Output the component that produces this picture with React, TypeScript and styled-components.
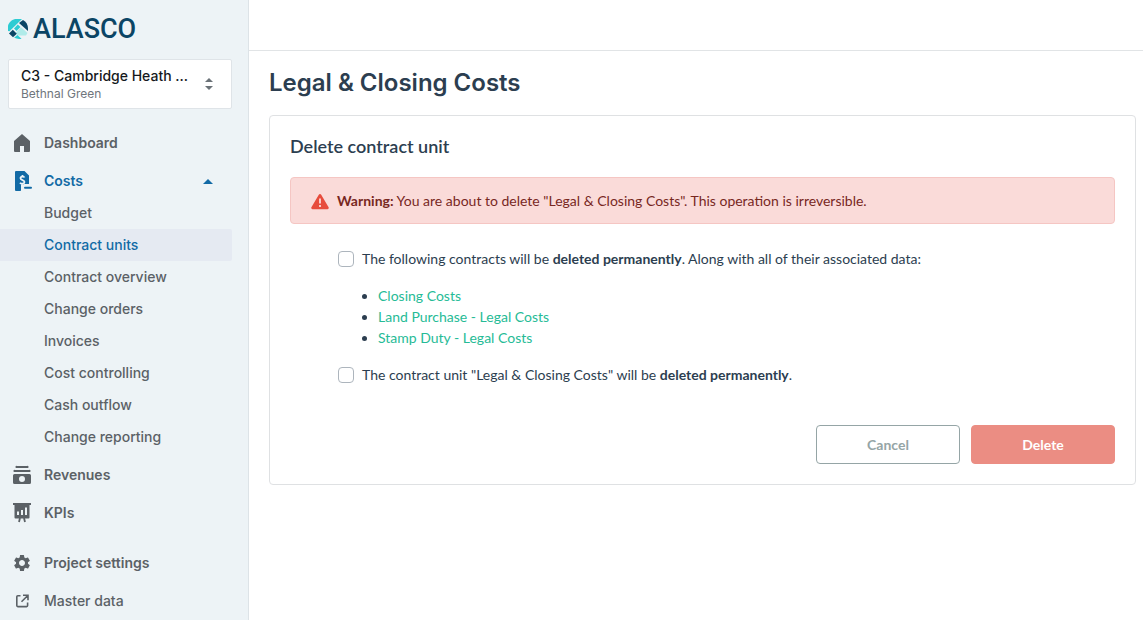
import React from "react";
import styled, { createGlobalStyle, css } from "styled-components";
import { MdSettings } from "react-icons/md";

const GlobalStyle = createGlobalStyle`
  *, *::before, *::after { box-sizing: border-box; }
  body {
    margin: 0;
    background: #fff;
    color: #2c3e50;
    font-family: Lato, "Liberation Sans", sans-serif;
    font-size: 14px;
    line-height: 21px;
  }
`;

const inter = css`
  font-family: Inter, "Liberation Sans", sans-serif;
`;

const Page = styled.div`
  display: flex;
  min-height: 100vh;
`;

const Sidebar = styled.aside`
  ${inter}
  flex: 0 0 249px;
  height: 100vh;
  overflow: hidden;
  padding-right: 16px;
  background: #edf3f6;
  border-right: 1px solid #dde3e7;
`;

const Brand = styled.a`
  display: flex;
  align-items: center;
  gap: 4px;
  height: 58px;
  margin-bottom: 1px;
  padding-left: 8px;
  color: #0b4565;
  text-decoration: none;
`;

const BrandName = styled.span`
  font-family: Roboto, "Liberation Sans", sans-serif;
  font-size: 27px;
  font-weight: 500;
  line-height: 32px;
`;

const ProjectPicker = styled.button`
  ${inter}
  display: flex;
  align-items: center;
  justify-content: space-between;
  width: calc(100% - 8px);
  height: 50px;
  margin: 0 0 18px 8px;
  padding: 0 18px 0 12px;
  border: 1px solid #dfe4e8;
  border-radius: 2px;
  background: #fff;
  text-align: left;
`;

const ProjectText = styled.span`
  display: flex;
  flex-direction: column;
`;

const ProjectName = styled.span`
  color: #16191d;
  font-size: 14px;
  font-weight: 500;
  line-height: 20px;
`;

const ProjectPlace = styled.span`
  color: #6f767c;
  font-size: 12px;
  line-height: 16px;
`;

const NavList = styled.ul<{ $spaced?: boolean }>`
  display: flex;
  flex-direction: column;
  gap: 6px;
  margin: ${(p) => (p.$spaced ? "18px 0 0" : "0")};
  padding: 0;
  list-style: none;
`;

const NavLink = styled.a<{ $active?: boolean; $light?: boolean }>`
  display: flex;
  align-items: center;
  gap: 12px;
  height: 32px;
  padding: 0 19px 0 12px;
  color: ${(p) => (p.$active ? "#126aa5" : "#5b6166")};
  font-size: 14px;
  font-weight: ${(p) => (p.$light ? 500 : 600)};
  line-height: 20px;
  text-decoration: none;

  svg { flex: none; }
`;

const NavLabel = styled.span`
  flex: 1;
`;

const SubList = styled.ul`
  margin: 0;
  padding: 0;
  list-style: none;
`;

const SubLink = styled.a<{ $active?: boolean }>`
  display: flex;
  align-items: center;
  height: 32px;
  padding-left: 44px;
  border-radius: 0 2px 2px 0;
  background: ${(p) => (p.$active ? "#e5eaf2" : "transparent")};
  color: ${(p) => (p.$active ? "#126aa5" : "#5b6166")};
  font-size: 14px;
  font-weight: 500;
  line-height: 20px;
  text-decoration: none;
`;

const Main = styled.main`
  flex: 1;
  min-width: 0;
`;

const TopBar = styled.header`
  height: 51px;
  border-bottom: 1px solid #e1e4e6;
`;

const Content = styled.div`
  padding: 16px 7px 20px 20px;
`;

const PageTitle = styled.h1`
  ${inter}
  margin: 0 0 16px;
  font-size: 24px;
  font-weight: 600;
  line-height: 32px;
`;

const Card = styled.section`
  padding: 20px;
  border: 1px solid #dfe1e3;
  border-radius: 4px;
`;

const CardTitle = styled.h2`
  margin: 0 0 20px;
  font-size: 18px;
  font-weight: 600;
  line-height: 21px;
`;

const Alert = styled.div`
  display: flex;
  align-items: center;
  gap: 8px;
  padding: 12px 20px;
  border: 1px solid #f5c6c3;
  border-radius: 4px;
  background: #fadbd9;
  color: #78281f;
`;

const Confirmations = styled.div`
  padding: 24px 48px 40px;
`;

const CheckLabel = styled.label`
  display: flex;
  align-items: center;
  gap: 8px;
`;

const Checkbox = styled.input`
  appearance: none;
  flex: none;
  width: 16px;
  height: 16px;
  margin: 0;
  border: 1px solid #adb5bd;
  border-radius: 4px;
  background: #fff;

  &:checked { background: #18bc9c; }
`;

const ContractList = styled.ul`
  margin: 16px 0;
  padding-left: 40px;
`;

const ContractLink = styled.a`
  color: #26bb96;
  text-decoration: none;
`;

const Actions = styled.div`
  display: flex;
  justify-content: flex-end;
  gap: 11px;
`;

const Button = styled.button<{ $danger?: boolean }>`
  width: 144px;
  height: 39px;
  padding: 0;
  border: 1px solid ${(p) => (p.$danger ? "#eb8d83" : "#95a5a6")};
  border-radius: 4px;
  background: ${(p) => (p.$danger ? "#eb8d83" : "#fff")};
  color: ${(p) => (p.$danger ? "#fff" : "#95a5a6")};
  font-family: inherit;
  font-size: 14px;
  font-weight: 700;
  line-height: 20px;
`;

const LogoMark = () => (
  <svg width="21" height="20" viewBox="0 0 21 20" aria-hidden="true">
    <path d="M0 12V6.500C1.500 2.500 4.500 0 8.500 0H14L1.500 12.200z" fill="#2dccd3" />
    <path d="M15 1c3 1.500 5 4.500 5 8.500V12L11 4z" fill="#0b4565" />
    <path d="M9.800 5.500 12.500 8 8.500 12 6 9.500z" fill="#2dccd3" />
    <path d="M13 8.200 19.500 14 18 16.500H10L7.500 14z" fill="#b0ebe9" />
    <path d="M4.800 10.800 8.800 14.800 5 18.300 1 14.500z" fill="#0b4565" />
    <path d="M9.300 16 13.500 19.700c-2.500.6-5 .2-7.300-.9z" fill="#2dccd3" />
  </svg>
);

const SortIcon = () => (
  <svg width="8" height="12" viewBox="0 0 8 12" fill="#6b7278" aria-hidden="true">
    <path d="M0 4 4 0l4 4zM0 8h8l-4 4z" />
  </svg>
);

const HomeIcon = () => (
  <svg width="20" height="20" viewBox="0 0 20 20" fill="currentColor" aria-hidden="true">
    <path d="M10 1 18 8v10a1 1 0 0 1-1 1h-5v-6H8v6H3a1 1 0 0 1-1-1V8z" />
  </svg>
);

const CostsIcon = () => (
  <svg width="20" height="20" viewBox="0 0 20 20" aria-hidden="true">
    <path
      fill="currentColor"
      d="M4 0h8.500L17 4.500V13h-4.500a2.500 2.500 0 0 0-2.500 2.500V18l-1.500 2H4a1 1 0 0 1-1-1V1a1 1 0 0 1 1-1z"
    />
    <path
      d="M12.500 6.500C12 5.200 8.500 5 8.500 7.200c0 2.300 4 1.500 4 3.800 0 2-3.500 2-4.500.7M10.500 4v2M10 12.500V15"
      fill="none"
      stroke="#edf3f6"
      strokeWidth="1.800"
    />
    <path d="M9 14h11v6H9z" fill="#edf3f6" />
    <path d="M13 16.700h6" stroke="currentColor" strokeWidth="2" strokeLinecap="round" />
  </svg>
);

const CaretIcon = () => (
  <svg width="10" height="5" viewBox="0 0 10 5" fill="currentColor" aria-hidden="true">
    <path d="M0 5 5 0l5 5z" />
  </svg>
);

const RevenuesIcon = () => (
  <svg width="20" height="20" viewBox="0 0 20 20" fill="currentColor" aria-hidden="true">
    <path d="M5 1h10a1 1 0 0 1 1 2H4a1 1 0 0 1 1-2zM3 5h14a1 1 0 0 1 1 2H2a1 1 0 0 1 1-2z" />
    <path
      fillRule="evenodd"
      d="M2.500 9h15A1.500 1.500 0 0 1 19 10.500v7a1.500 1.500 0 0 1-1.500 1.500h-15A1.500 1.500 0 0 1 1 17.500v-7A1.500 1.500 0 0 1 2.500 9zM10 11a3 3 0 1 0 0 6 3 3 0 0 0 0-6z"
    />
  </svg>
);

const KpiIcon = () => (
  <svg width="20" height="20" viewBox="0 0 20 20" aria-hidden="true">
    <path d="M1 0h18v2h-1.500v12.500a1 1 0 0 1-1 1h-13a1 1 0 0 1-1-1V2H1z" fill="currentColor" />
    <path d="M6 8.500V12M10 7v5M14 4.500V12" stroke="#edf3f6" strokeWidth="2" />
    <path d="M8 15l-1 4M12 15l1 4" stroke="currentColor" strokeWidth="1.800" />
  </svg>
);

const ExternalIcon = () => (
  <svg width="20" height="20" viewBox="0 0 20 20" fill="none" stroke="currentColor" strokeWidth="1.600" aria-hidden="true">
    <path d="M8.500 4.800H5.800a1 1 0 0 0-1 1v8.800a1 1 0 0 0 1 1h8.800a1 1 0 0 0 1-1V11.500M11 4.200h5v5M16 4.200l-6.500 6.500" />
  </svg>
);

const WarningIcon = () => (
  <svg width="18" height="18" viewBox="0 0 18 18" aria-hidden="true">
    <path
      d="M7.800 2.700a1.400 1.400 0 0 1 2.400 0l7.400 12.600a1.300 1.300 0 0 1-1.200 1.900H1.600a1.300 1.300 0 0 1-1.200-1.900z"
      fill="#e74c3c"
    />
    <path d="M9 6.500v5M9 13v2" stroke="#fadbd9" strokeWidth="1.800" />
  </svg>
);

const costPages = [
  "Budget",
  "Contract units",
  "Contract overview",
  "Change orders",
  "Invoices",
  "Cost controlling",
  "Cash outflow",
  "Change reporting",
];

const contracts = ["Closing Costs", "Land Purchase - Legal Costs", "Stamp Duty - Legal Costs"];

export default function App() {
  return (
    <>
      <GlobalStyle />
      <Page>
        <Sidebar>
          <Brand href="#">
            <LogoMark />
            <BrandName>ALASCO</BrandName>
          </Brand>
          <ProjectPicker type="button">
            <ProjectText>
              <ProjectName>C3 - Cambridge Heath ...</ProjectName>
              <ProjectPlace>Bethnal Green</ProjectPlace>
            </ProjectText>
            <SortIcon />
          </ProjectPicker>
          <nav aria-label="Project">
            <NavList>
              <li>
                <NavLink href="#dashboard"><HomeIcon /><NavLabel>Dashboard</NavLabel></NavLink>
              </li>
              <li>
                <NavLink href="#costs" $active>
                  <CostsIcon />
                  <NavLabel>Costs</NavLabel>
                  <CaretIcon />
                </NavLink>
                <SubList>
                  {costPages.map((name) => (
                    <li key={name}>
                      <SubLink href="#costs" $active={name === "Contract units"}>{name}</SubLink>
                    </li>
                  ))}
                </SubList>
              </li>
              <li>
                <NavLink href="#revenues"><RevenuesIcon /><NavLabel>Revenues</NavLabel></NavLink>
              </li>
              <li>
                <NavLink href="#kpis"><KpiIcon /><NavLabel>KPIs</NavLabel></NavLink>
              </li>
            </NavList>
            <NavList $spaced>
              <li>
                <NavLink href="#settings"><MdSettings size={20} /><NavLabel>Project settings</NavLabel></NavLink>
              </li>
              <li>
                <NavLink href="#master" $light><ExternalIcon /><NavLabel>Master data</NavLabel></NavLink>
              </li>
            </NavList>
          </nav>
        </Sidebar>
        <Main>
          <TopBar />
          <Content>
            <PageTitle>Legal &amp; Closing Costs</PageTitle>
            <Card>
              <CardTitle>Delete contract unit</CardTitle>
              <Alert role="alert">
                <WarningIcon />
                <span>
                  <strong>Warning:</strong> You are about to delete "Legal &amp; Closing Costs". This operation is irreversible.
                </span>
              </Alert>
              <Confirmations>
                <CheckLabel>
                  <Checkbox type="checkbox" />
                  <span>
                    The following contracts will be <strong>deleted permanently</strong>. Along with all of their associated data:
                  </span>
                </CheckLabel>
                <ContractList>
                  {contracts.map((name) => (
                    <li key={name}><ContractLink href="#contract">{name}</ContractLink></li>
                  ))}
                </ContractList>
                <CheckLabel>
                  <Checkbox type="checkbox" />
                  <span>
                    The contract unit "Legal &amp; Closing Costs" will be <strong>deleted permanently</strong>.
                  </span>
                </CheckLabel>
              </Confirmations>
              <Actions>
                <Button type="button">Cancel</Button>
                <Button type="button" $danger>Delete</Button>
              </Actions>
            </Card>
          </Content>
        </Main>
      </Page>
    </>
  );
}
